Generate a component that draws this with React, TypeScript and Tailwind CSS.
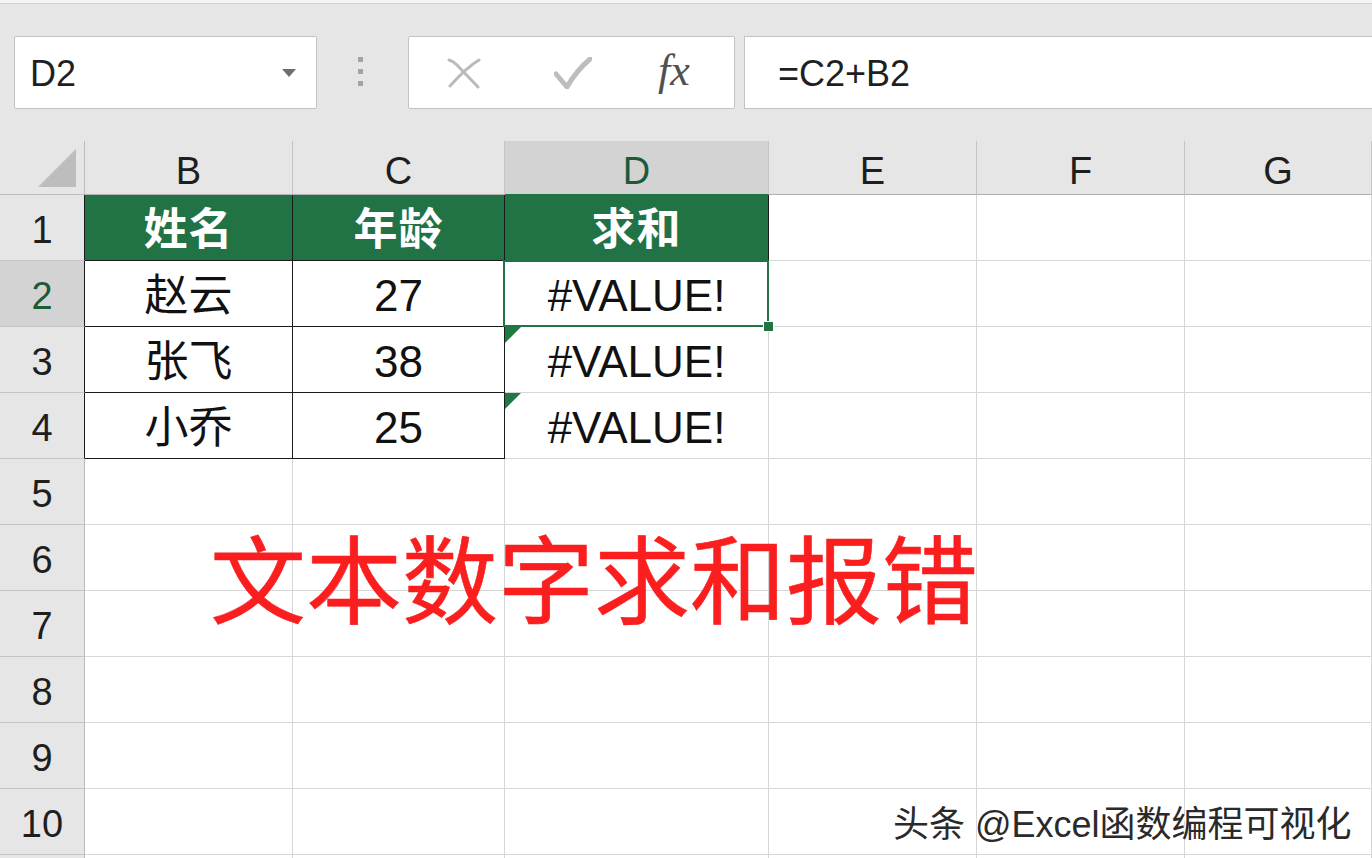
import React from 'react';

const FONT = { fontFamily: '"Liberation Sans", "Noto Sans CJK SC", sans-serif' };

const cols = ['B', 'C', 'D', 'E', 'F', 'G'];
const data: Record<number, string[]> = {
  1: ['姓名', '年龄', '求和'],
  2: ['赵云', '27', '#VALUE!'],
  3: ['张飞', '38', '#VALUE!'],
  4: ['小乔', '25', '#VALUE!'],
};

function CellBox({ row, col }: { row: number; col: number }) {
  const inTable = row >= 1 && row <= 4 && col <= 2;
  const header = row === 1 && col <= 2;
  const black = (row === 1 && col <= 2) || (row >= 2 && row <= 4 && col <= 1);
  const text = inTable ? data[row][col] : '';
  const selected = row === 2 && col === 2;
  const flagged = (row === 3 || row === 4) && col === 2;
  return (
    <div
      className={`relative flex items-center justify-center pt-[4px] border-r border-b ${
        black ? 'border-[#1b1b1b]' : 'border-[#d6d6d6]'
      } ${header ? 'bg-[#217346] text-white font-bold' : 'bg-white text-[#111]'} text-[44px] leading-none ${
        selected ? 'z-10' : ''
      }`}
    >
      <span className={header ? 'tracking-[1px]' : ''}>{text}</span>
      {flagged && (
        <svg className="absolute left-0 top-0" width="16" height="16" viewBox="0 0 16 16">
          <path d="M0 0 L16 0 L0 16 Z" fill="#1e7a3f" />
        </svg>
      )}
      {selected && (
        <>
          <div className="absolute -left-[2px] -top-px -right-[1px] -bottom-[1px] border-2 border-[#217346] pointer-events-none" />
          <div className="absolute -right-[6px] -bottom-[6px] w-[11px] h-[11px] bg-[#217346] border border-white" />
        </>
      )}
    </div>
  );
}

export default function App() {
  const rows = [1, 2, 3, 4, 5, 6, 7, 8, 9, 10, 11];
  return (
    <div className="relative w-[1372px] h-[858px] overflow-hidden bg-white" style={FONT}>
      {/* toolbar */}
      <div className="h-[4px] bg-[#f4f4f4] border-b border-[#d4d4d4]" />
      <div className="h-[137px] bg-[#e6e6e6] flex items-start pt-[32px]">
        <div className="ml-[14px] w-[303px] h-[73px] bg-white border border-[#c3c3c3] rounded-[2px] flex items-center justify-between pl-[15px] pr-[20px]">
          <span className="text-[36px] text-[#1f1f1f] pt-[2px]">D2</span>
          <svg width="14" height="8" viewBox="0 0 14 8">
            <path d="M0 0 L14 0 L7 8 Z" fill="#6e6e6e" />
          </svg>
        </div>
        <div className="ml-[41px] mt-[21px] flex flex-col gap-[7px]">
          <div className="w-[5px] h-[5px] bg-[#a3a3a3]" />
          <div className="w-[5px] h-[5px] bg-[#a3a3a3]" />
          <div className="w-[5px] h-[5px] bg-[#a3a3a3]" />
        </div>
        <div className="ml-[45px] w-[327px] h-[73px] bg-white border border-[#c3c3c3] rounded-[2px] flex items-center">
          <svg className="ml-[38px]" width="34" height="32" viewBox="0 0 34 32">
            <path d="M2 3 Q6 4 10 8 L31 30" stroke="#bababa" strokeWidth="3" fill="none" strokeLinecap="round" />
            <path d="M32 3 Q20 10 3 29" stroke="#bababa" strokeWidth="3" fill="none" strokeLinecap="round" />
          </svg>
          <svg className="ml-[73px]" width="38" height="32" viewBox="0 0 38 32">
            <path d="M2 17 L13 30 Q22 14 36 2" stroke="#bdbdbd" strokeWidth="5" fill="none" strokeLinecap="round" strokeLinejoin="round" />
          </svg>
          <span
            className="ml-[66px] text-[44px] italic text-[#505050] leading-none pb-[4px]"
            style={{ fontFamily: '"Liberation Serif", serif' }}
          >
            fx
          </span>
        </div>
        <div className="ml-[9px] flex-1 h-[73px] bg-white border border-r-0 border-[#c3c3c3] flex items-center pl-[33px]">
          <span className="text-[36px] text-[#1f1f1f] pt-[2px]">=C2+B2</span>
        </div>
      </div>

      {/* sheet */}
      <div className="grid grid-cols-[85px_208px_212px_264px_208px_208px_187px] grid-rows-[54px_repeat(10,66px)_20px] bg-white">
        <div className="bg-[#e6e6e6] border-r border-b border-[#bcbcbc] flex items-end justify-end pr-[8px] pb-[7px]">
          <svg width="38" height="38" viewBox="0 0 38 38">
            <path d="M38 0 L38 38 L0 38 Z" fill="#bdbdbd" />
          </svg>
        </div>
        {cols.map((c, i) => (
          <div
            key={c}
            className={`flex items-center justify-center pt-[6px] text-[38px] leading-none border-r border-b ${
              i === 2
                ? 'bg-[#d3d3d3] text-[#1d5a38] border-b-[#217346] border-r-[#c4c4c4]'
                : 'bg-[#e6e6e6] text-[#1e1e1e] border-[#c4c4c4] border-b-[#b0b0b0]'
            }`}
          >
            {c}
          </div>
        ))}
        {rows.map(r => (
          <React.Fragment key={r}>
            <div
              className={`flex items-center justify-center pt-[4px] text-[38px] leading-none border-b border-r ${
                r === 2 ? 'bg-[#d3d3d3] text-[#1d5a38]' : 'bg-[#e6e6e6] text-[#1e1e1e]'
              } border-b-[#c6c6c6] ${r <= 4 ? 'border-r-[#1b1b1b]' : 'border-r-[#b8b8b8]'}`}
            >
              {r <= 10 ? r : ''}
            </div>
            {cols.map((c, i) => (
              <CellBox key={c} row={r} col={i} />
            ))}
          </React.Fragment>
        ))}
      </div>

      {/* overlay caption */}
      <div className="absolute left-[210px] top-[535px] text-[96px] leading-none text-[#fa1e1e] [-webkit-text-stroke:0.6px_#fa1e1e]">
        文本数字求和报错
      </div>
      <div
        className="absolute left-[893px] top-[807px] text-[36px] leading-none text-[#2a2a2a]"
        style={{ textShadow: '1px 1px 0 #fff, -1px -1px 0 #fff, 2px 2px 1px rgba(255,255,255,0.9)' }}
      >
        头条 @Excel函数编程可视化
      </div>
    </div>
  );
}
